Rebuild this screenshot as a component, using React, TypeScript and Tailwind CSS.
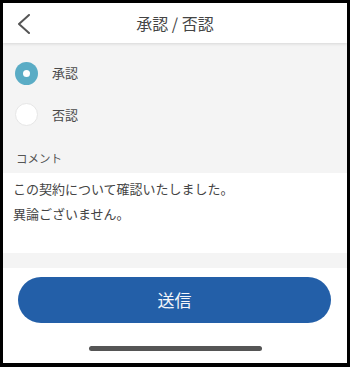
const font = {
  fontFamily: '"Noto Sans CJK JP", "Noto Sans", sans-serif',
};

const Radio: React.FC<{ checked?: boolean; label: string; rowClass: string }> = ({
  checked = false,
  label,
  rowClass,
}) => {
  return (
    <div className={`flex items-center pl-[12px] ${rowClass}`}>
      {checked ? (
        <div className="w-[23px] h-[23px] rounded-full bg-[#5aacc5] flex items-center justify-center">
          <div className="w-[7px] h-[7px] rounded-full bg-white" />
        </div>
      ) : (
        <div className="w-[23px] h-[23px] rounded-full bg-white border border-[#e6e6e6]" />
      )}
      <span className="ml-[14px] text-[13px] leading-[20px] text-[#4a4a4a]">{label}</span>
    </div>
  );
};

export default function App() {
  return (
    <div
      className="w-[350px] h-[367px] bg-black pt-[3px] pl-[3px] pr-[3px] pb-[4px]"
      style={font}
    >
      <div className="w-full h-full flex flex-col bg-white overflow-hidden">
        {/* Header */}
        <div className="relative z-10 h-[40px] shrink-0 bg-white flex items-center justify-center shadow-[0_1px_3px_rgba(0,0,0,0.12)]">
          <svg
            className="absolute left-[14px] top-[11px] w-[14px] h-[20px]"
            viewBox="0 0 14 20"
            fill="none"
            stroke="#555"
            strokeWidth={2}
            strokeLinecap="round"
            strokeLinejoin="round"
          >
            <path d="M12 1L2 10l10 9" />
          </svg>
          <span className="text-[16px] leading-[20px] text-[#444]">承認 / 否認</span>
        </div>

        {/* Radio section */}
        <div className="bg-[#f4f4f4] pt-[9px]">
          <Radio checked label="承認" rowClass="h-[42px]" />
          <Radio label="否認" rowClass="h-[41px]" />
          <div className="h-[38px] flex items-end pb-[8px] pl-[13px]">
            <span className="text-[11.5px] leading-[14px] text-[#555]">コメント</span>
          </div>
        </div>

        {/* Comment */}
        <div className="h-[80px] bg-white pt-[3px] px-[10px] text-[13px] leading-[25px] text-[#444]">
          <div>この契約について確認いたしました。</div>
          <div>異論ございません。</div>
        </div>

        <div className="h-[15px] bg-[#f4f4f4]" />

        {/* Footer */}
        <div className="flex-1 bg-white flex flex-col items-center">
          <button className="mt-[9px] w-[313px] ml-[-1px] h-[46px] rounded-full bg-[#235fa8] text-[#f4f6fa] text-[17px] leading-[24px] flex items-center justify-center">
            送信
          </button>
          <div className="mt-[23px] w-[173px] h-[5px] rounded-full bg-[#555]" />
        </div>
      </div>
    </div>
  );
}
